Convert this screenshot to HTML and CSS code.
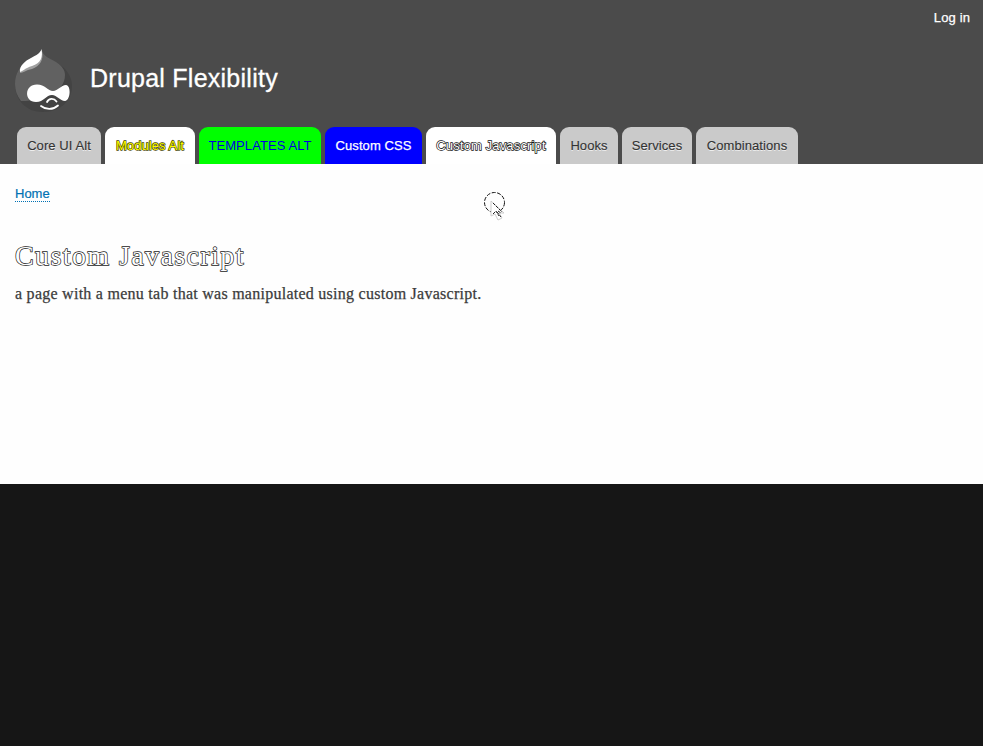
FILE: index.html
```
<!DOCTYPE html>
<html lang="en">
<head>
<meta charset="utf-8">
<title>Custom Javascript | Drupal Flexibility</title>
<link rel="stylesheet" href="styles.css">
</head>
<body>
<header class="header">
  <nav class="account"><a href="#">Log in</a></nav>
  <div class="branding">
    <svg class="logo" width="58" height="67" viewBox="0 0 58 67" aria-hidden="true">
      <path d="M27.500 3C29 10 35 12 43 17C52 22 58 30 58 40C58 55 46 66 29 66C12 66 1 54 1 38C1 27 6 20 14 14C20 10 26 9 27.500 3Z" fill="#434343"/>
      <path d="M27.500 3C29 10 35 12 42 16C48 20 51 24 51 29C51 38 45 44 38 48C28 53 21 55 7 55C3 50 1 44 1 38C1 27 6 20 14 14C20 10 26 9 27.500 3Z" fill="#616161"/>
      <path d="M28 5C30 14 26 20 18 23C12 24 9 27 6 27C6 19 12 16 17 13C22 10 26 9 28 5Z" fill="#a0a0a0"/>
      <path d="M27.500 3C29 11 27 17 18 20C11 22 9 25 6 26C5 20 11 15 17 12C22 9 26 8 27.500 3Z" fill="#fff"/>
      <path d="M23 38.500C31 38.500 34 45 39 45C44 45 47 39 52 39C57 39 57 54 51 55C46 55 43 49 38 49C32 49 30 56 22 56C10 56 10 38.500 23 38.500Z" fill="#fff"/>
      <path d="M33 56C35 52 40 52 42.500 55.500M27 60C32 64 39 64 44 59.500" fill="none" stroke="#fff" stroke-width="1.800" stroke-linecap="round"/>
    </svg>
    <a class="site-name" href="#">Drupal Flexibility</a>
  </div>
  <nav class="tabs">
    <a class="tab core" href="#">Core UI Alt</a>
    <a class="tab modules" href="#">Modules Alt</a>
    <a class="tab templates" href="#">TEMPLATES ALT</a>
    <a class="tab css" href="#">Custom CSS</a>
    <a class="tab javascript" href="#">Custom Javascript</a>
    <a class="tab hooks" href="#">Hooks</a>
    <a class="tab services" href="#">Services</a>
    <a class="tab combinations" href="#">Combinations</a>
  </nav>
</header>
<main class="content">
  <nav class="breadcrumb"><a href="#">Home</a></nav>
  <h1>Custom Javascript</h1>
  <p>a page with a menu tab that was manipulated using custom Javascript.</p>
  <svg class="pointer" width="26" height="32" viewBox="0 0 26 32" aria-hidden="true">
    <circle cx="11.500" cy="11.500" r="10" fill="none" stroke="#111" stroke-width="1" stroke-dasharray="4 1.500"/>
    <path d="M8 10V25L12 23L15 29L19 27L16 22H21Z" fill="#fff" stroke="#ccc" stroke-width="1"/>
    <path d="M10 12L19 21M10 23L13 20L16 25M14 21L18 26M15 20L18 22" fill="none" stroke="#222" stroke-width="1" stroke-dasharray="3 1"/>
  </svg>
</main>
</body>
</html>
```
FILE: styles.css
```
* { box-sizing: border-box; }
body {
  margin: 0;
  min-height: 746px;
  background: #161616;
  font-family: "Liberation Sans", Arial, sans-serif;
  font-size: 13px;
}
a { color: inherit; text-decoration: none; }
.header {
  height: 164px;
  background: #4b4b4b;
  display: flex;
  flex-direction: column;
}
.account {
  height: 46px;
  padding: 10px 13px 0 0;
  text-align: right;
  line-height: 15px;
  letter-spacing: .12px;
  color: #fff;
  -webkit-text-stroke: .25px #fff;
}
.branding {
  height: 81px;
  padding: 0 14px;
  display: flex;
  gap: 18px;
}
.site-name {
  margin-top: 17px;
  font-size: 25px;
  line-height: 30px;
  letter-spacing: .25px;
  color: #fff;
  -webkit-text-stroke: .3px #fff;
}
.tabs {
  display: flex;
  gap: 4px;
  padding-left: 17px;
}
.tab {
  height: 37px;
  border-radius: 9px 9px 0 0;
  background: #cacaca;
  color: #333;
  line-height: 37px;
  letter-spacing: .08px;
  text-align: center;
  white-space: nowrap;
  text-shadow: 0 1px #eee;
  -webkit-text-stroke: .15px #333;
}
.core { width: 84px; }
.modules {
  width: 90px;
  background: #fff;
  color: #ff0;
  text-shadow: none;
  -webkit-text-stroke: 1.3px #444400;
  paint-order: stroke fill;
}
.templates {
  width: 122px;
  background: #0f0;
  color: #0000e0;
  text-shadow: none;
  -webkit-text-stroke: 0;
}
.css {
  width: 97px;
  background: #00f;
  color: #fff;
  text-shadow: none;
  -webkit-text-stroke: .25px #fff;
}
.javascript {
  width: 130px;
  background: #fff;
  color: #fff;
  letter-spacing: .14px;
  text-shadow: none;
  -webkit-text-stroke: 1.4px #111;
  paint-order: stroke fill;
}
.hooks { width: 58px; }
.services { width: 70px; }
.combinations { width: 102px; }
.content {
  position: relative;
  height: 320px;
  padding: 22px 15px 0;
  background: #fefefe;
}
.breadcrumb { height: 54px; line-height: 15px; color: #0071b3; }
.breadcrumb a {
  display: inline-block;
  height: 16px;
  border-bottom: 1px dotted #0071b3;
  -webkit-text-stroke: .2px #0071b3;
}
h1 {
  margin: 0;
  font: 400 28px/32px Georgia, "Liberation Serif", serif;
  letter-spacing: 1.4px;
  color: #fefefe;
  -webkit-text-stroke: 1.4px #222;
  paint-order: stroke fill;
}
p {
  margin: 12px 0 0;
  font: 16px/20px Georgia, "Liberation Serif", serif;
  letter-spacing: .26px;
  color: #3b3b3b;
  -webkit-text-stroke: .25px #3b3b3b;
}
.pointer { position: absolute; left: 483px; top: 27px; }
```
